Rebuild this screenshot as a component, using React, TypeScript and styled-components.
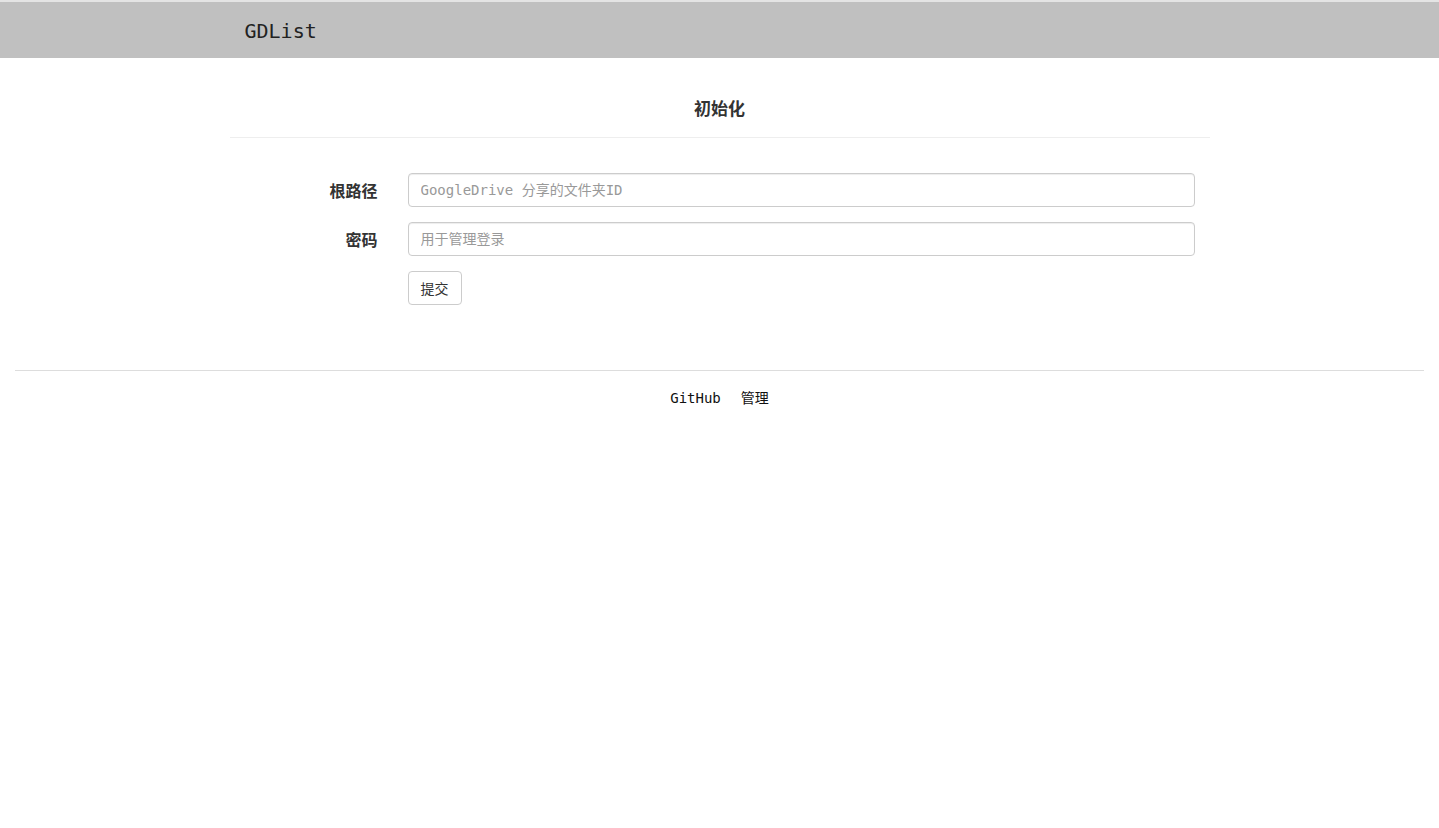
import React from "react";
import styled, { createGlobalStyle } from "styled-components";

const GlobalStyle = createGlobalStyle`
  html, body {
    margin: 0;
    padding: 0;
    background: #fff;
    font-family: "Noto Sans", "Noto Sans CJK SC", sans-serif;
    color: #333;
  }
  * { box-sizing: border-box; }
`;

const mono = `"DejaVu Sans Mono", "Noto Sans CJK SC", monospace`;

const App = () => {
  return (
    <>
      <GlobalStyle />
      <Sheader>
        <Scontainer>
          <Sbrand>GDList</Sbrand>
        </Scontainer>
      </Sheader>
      <Scontainer>
        <Stitle>初始化</Stitle>
        <Sform onSubmit={(e) => e.preventDefault()}>
          <Srow>
            <Slabel>根路径</Slabel>
            <Sinput placeholder="GoogleDrive 分享的文件夹ID" />
          </Srow>
          <Srow>
            <Slabel>密码</Slabel>
            <Sinput type="password" placeholder="用于管理登录" />
          </Srow>
          <Srow>
            <Slabel />
            <Sbutton type="submit">提交</Sbutton>
          </Srow>
        </Sform>
      </Scontainer>
      <Sfooter>
        <Slink>GitHub</Slink>
        <Slink>管理</Slink>
      </Sfooter>
    </>
  );
};

const Sheader = styled.header`
  height: 58px;
  background-color: #c0c0c0;
  border-top: 2px solid #e4e4e4;
`;

const Scontainer = styled.div`
  width: 980px;
  margin: 0 auto;
`;

const Sbrand = styled.div`
  padding: 2px 0 0 15px;
  font-family: ${mono};
  font-size: 20px;
  line-height: 54px;
  color: #222;
`;

const Stitle = styled.h2`
  margin: 0;
  padding: 38px 0 15px;
  font-size: 17px;
  line-height: 26px;
  font-weight: bold;
  text-align: center;
  color: #333;
  border-bottom: 1px solid #eee;
`;

const Sform = styled.form`
  margin-top: 35px;
  padding: 0 15px;
  display: flex;
  flex-direction: column;
  gap: 15px;
`;

const Srow = styled.div`
  display: flex;
  align-items: center;
  gap: 30px;
`;

const Slabel = styled.label`
  width: 133px;
  flex-shrink: 0;
  text-align: right;
  font-size: 16px;
  font-weight: bold;
  color: #333;
`;

const Sinput = styled.input`
  flex: 1;
  height: 34px;
  padding: 6px 12px;
  font-family: ${mono};
  font-size: 14px;
  color: #555;
  border: 1px solid #ccc;
  border-radius: 4px;
  box-shadow: inset 0 1px 1px rgba(0, 0, 0, 0.075);
  outline: none;
  &::placeholder {
    color: #999;
  }
`;

const Sbutton = styled.button`
  height: 34px;
  padding: 6px 12px;
  font-family: "Noto Sans CJK SC", sans-serif;
  font-size: 14px;
  line-height: 20px;
  color: #333;
  background-color: #fff;
  border: 1px solid #ccc;
  border-radius: 4px;
  cursor: pointer;
`;

const Sfooter = styled.footer`
  margin: 65px 15px 0;
  padding-top: 17px;
  border-top: 1px solid #ddd;
  display: flex;
  justify-content: center;
  gap: 20px;
`;

const Slink = styled.a`
  font-family: ${mono};
  font-size: 14px;
  line-height: 20px;
  color: #111;
  cursor: pointer;
`;

export default App;
